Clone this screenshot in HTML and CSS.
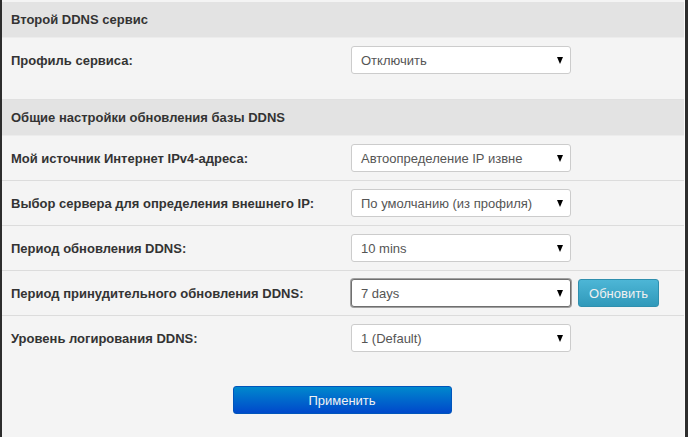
FILE: index.html
```html
<!DOCTYPE html>
<html lang="ru">
<head>
<meta charset="utf-8">
<link rel="stylesheet" href="styles.css">
</head>
<body>
<div class="panel">
  <div class="section-head">Второй DDNS сервис</div>
  <div class="section">
    <div class="row">
      <div class="label">Профиль сервиса:</div>
      <div class="select"><span>Отключить</span></div>
    </div>
  </div>
  <div class="section-head">Общие настройки обновления базы DDNS</div>
  <div class="section last">
    <div class="row bordered">
      <div class="label">Мой источник Интернет IPv4-адреса:</div>
      <div class="select"><span>Автоопределение IP извне</span></div>
    </div>
    <div class="row bordered">
      <div class="label">Выбор сервера для определения внешнего IP:</div>
      <div class="select"><span>По умолчанию (из профиля)</span></div>
    </div>
    <div class="row bordered">
      <div class="label">Период обновления DDNS:</div>
      <div class="select"><span>10 mins</span></div>
    </div>
    <div class="row bordered">
      <div class="label">Период принудительного обновления DDNS:</div>
      <div class="select focused"><span>7 days</span></div>
      <button class="btn-info">Обновить</button>
    </div>
    <div class="row">
      <div class="label">Уровень логирования DDNS:</div>
      <div class="select"><span>1 (Default)</span></div>
    </div>
  </div>
  <div class="actions">
    <button class="btn-primary">Применить</button>
  </div>
</div>
</body>
</html>
```
FILE: styles.css
```css
html, body {
  margin: 0;
  padding: 0;
  height: 100%;
}
body {
  background: #2d2d2d;
  font-family: "Liberation Sans", Arial, sans-serif;
  font-size: 13px;
  color: #333;
  overflow: hidden;
}
.panel {
  margin-left: 2px;
  width: 683px;
  height: 437px;
  background: #f4f4f4;
  border-right: 1px solid #fafafa;
  padding-top: 2px;
  box-sizing: border-box;
}
.section-head {
  height: 35px;
  line-height: 35px;
  background: #e3e3e3;
  border-bottom: 1px solid #ececec;
  padding-left: 9px;
  font-weight: bold;
}
.section {
  padding-bottom: 17px;
}
.section.last {
  padding-bottom: 0;
}
.section + .section-head {
  border-top: 1px solid #e0e0e0;
}
.row {
  display: flex;
  align-items: center;
  padding: 8px 0 8px 9px;
}
.row.bordered {
  border-bottom: 1px solid #dcdcdc;
}
.label {
  width: 340px;
  font-weight: bold;
}
.select {
  position: relative;
  width: 220px;
  height: 28px;
  box-sizing: border-box;
  background: #fff;
  border: 1px solid #ccc;
  border-radius: 3px;
  color: #555;
  padding-left: 9px;
  line-height: 27px;
}
.select::after {
  content: "";
  position: absolute;
  right: 7px;
  top: 10px;
  border-left: 3px solid transparent;
  border-right: 3px solid transparent;
  border-top: 7px solid #000;
}
.select.focused {
  border-color: #6f6f6f;
  box-shadow: 0 0 0 1px #a0a0a0;
}
.btn-info {
  margin-left: 7px;
  width: 81px;
  height: 28px;
  border: 1px solid #2f8fae;
  border-radius: 3px;
  background: linear-gradient(#4db6d6, #3099ba);
  color: #f0f0f0;
  font-family: inherit;
  font-size: 13px;
  padding: 0;
}
.actions {
  display: flex;
  justify-content: center;
  padding-top: 26px;
  padding-right: 2px;
}
.btn-primary {
  width: 219px;
  height: 28px;
  border: 1px solid #0055bb;
  border-radius: 3px;
  background: linear-gradient(#0088cd, #0048cb);
  color: #f2f2f2;
  font-family: inherit;
  font-size: 13px;
  padding: 0;
}
```
